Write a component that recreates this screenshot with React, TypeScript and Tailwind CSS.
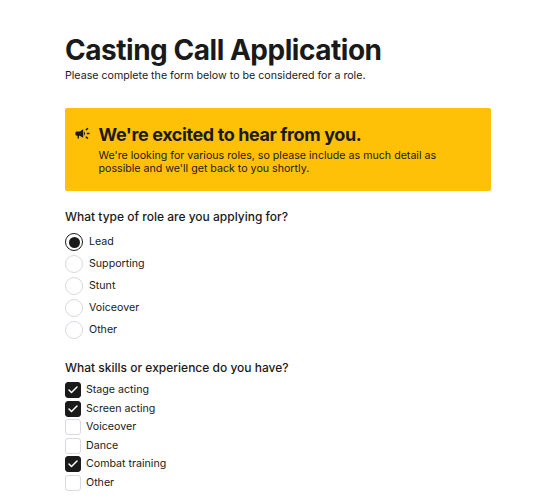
import { Check } from 'lucide-react'
import { MdCampaign } from 'react-icons/md'

const roles = [
  { label: 'Lead', checked: true },
  { label: 'Supporting', checked: false },
  { label: 'Stunt', checked: false },
  { label: 'Voiceover', checked: false },
  { label: 'Other', checked: false },
]

const skills = [
  { label: 'Stage acting', checked: true },
  { label: 'Screen acting', checked: true },
  { label: 'Voiceover', checked: false },
  { label: 'Dance', checked: false },
  { label: 'Combat training', checked: true },
  { label: 'Other', checked: false },
]

export default function App() {
  return (
    <main className="h-[500px] overflow-hidden bg-white font-['Inter',sans-serif] text-[#1a1a1a]">
      <div className="ml-[65px] w-[426px] pt-[32px]">
        <h1 className="text-[28px] leading-[36px] font-bold tracking-[-0.47px]">Casting Call Application</h1>
        <p className="text-[10.65px] leading-[15px]">Please complete the form below to be considered for a role.</p>

        <div className="mt-[25px] flex h-[83px] gap-[8px] rounded-[2px] bg-[#ffc107] pt-[16px] pr-[40px] pl-[8.5px]">
          <MdCampaign className="mt-[1px] h-[17px] w-[17px] shrink-0" />
          <div>
            <h2 className="text-[18px] leading-[22px] font-bold tracking-[-0.4px]">We're excited to hear from you.</h2>
            <p className="mt-[3px] text-[10.65px] leading-[13px]">
              We're looking for various roles, so please include as much detail as possible and we'll get back to you shortly.
            </p>
          </div>
        </div>

        <h3 className="mt-[17px] text-[12px] leading-[18px] font-medium">What type of role are you applying for?</h3>
        <div className="mt-[6px] flex flex-col gap-[2px]">
          {roles.map((role) => (
            <div key={role.label} className="flex h-[20px] items-center gap-[6px]">
              <span className={`flex h-[18px] w-[18px] items-center justify-center rounded-full border ${role.checked ? 'border-[#1a1a1a]' : 'border-[#d9d9e0]'}`}>
                {role.checked && <span className="h-[11px] w-[11px] rounded-full bg-[#1a1a1a]" />}
              </span>
              <span className="text-[10.65px]">{role.label}</span>
            </div>
          ))}
        </div>

        <h3 className="mt-[19px] text-[12px] leading-[18px] font-medium">What skills or experience do you have?</h3>
        <div className="mt-[4.5px] flex flex-col gap-[1.6px]">
          {skills.map((skill) => (
            <div key={skill.label} className="flex h-[17px] items-center gap-[5px]">
              <span className={`flex h-[16px] w-[16px] items-center justify-center rounded-[3px] border ${skill.checked ? 'border-[#1a1a1a] bg-[#1a1a1a]' : 'border-[#d9d9e0]'}`}>
                {skill.checked && <Check className="h-[12px] w-[12px] text-white" strokeWidth={3} />}
              </span>
              <span className="text-[10.65px]">{skill.label}</span>
            </div>
          ))}
        </div>
      </div>
    </main>
  )
}
